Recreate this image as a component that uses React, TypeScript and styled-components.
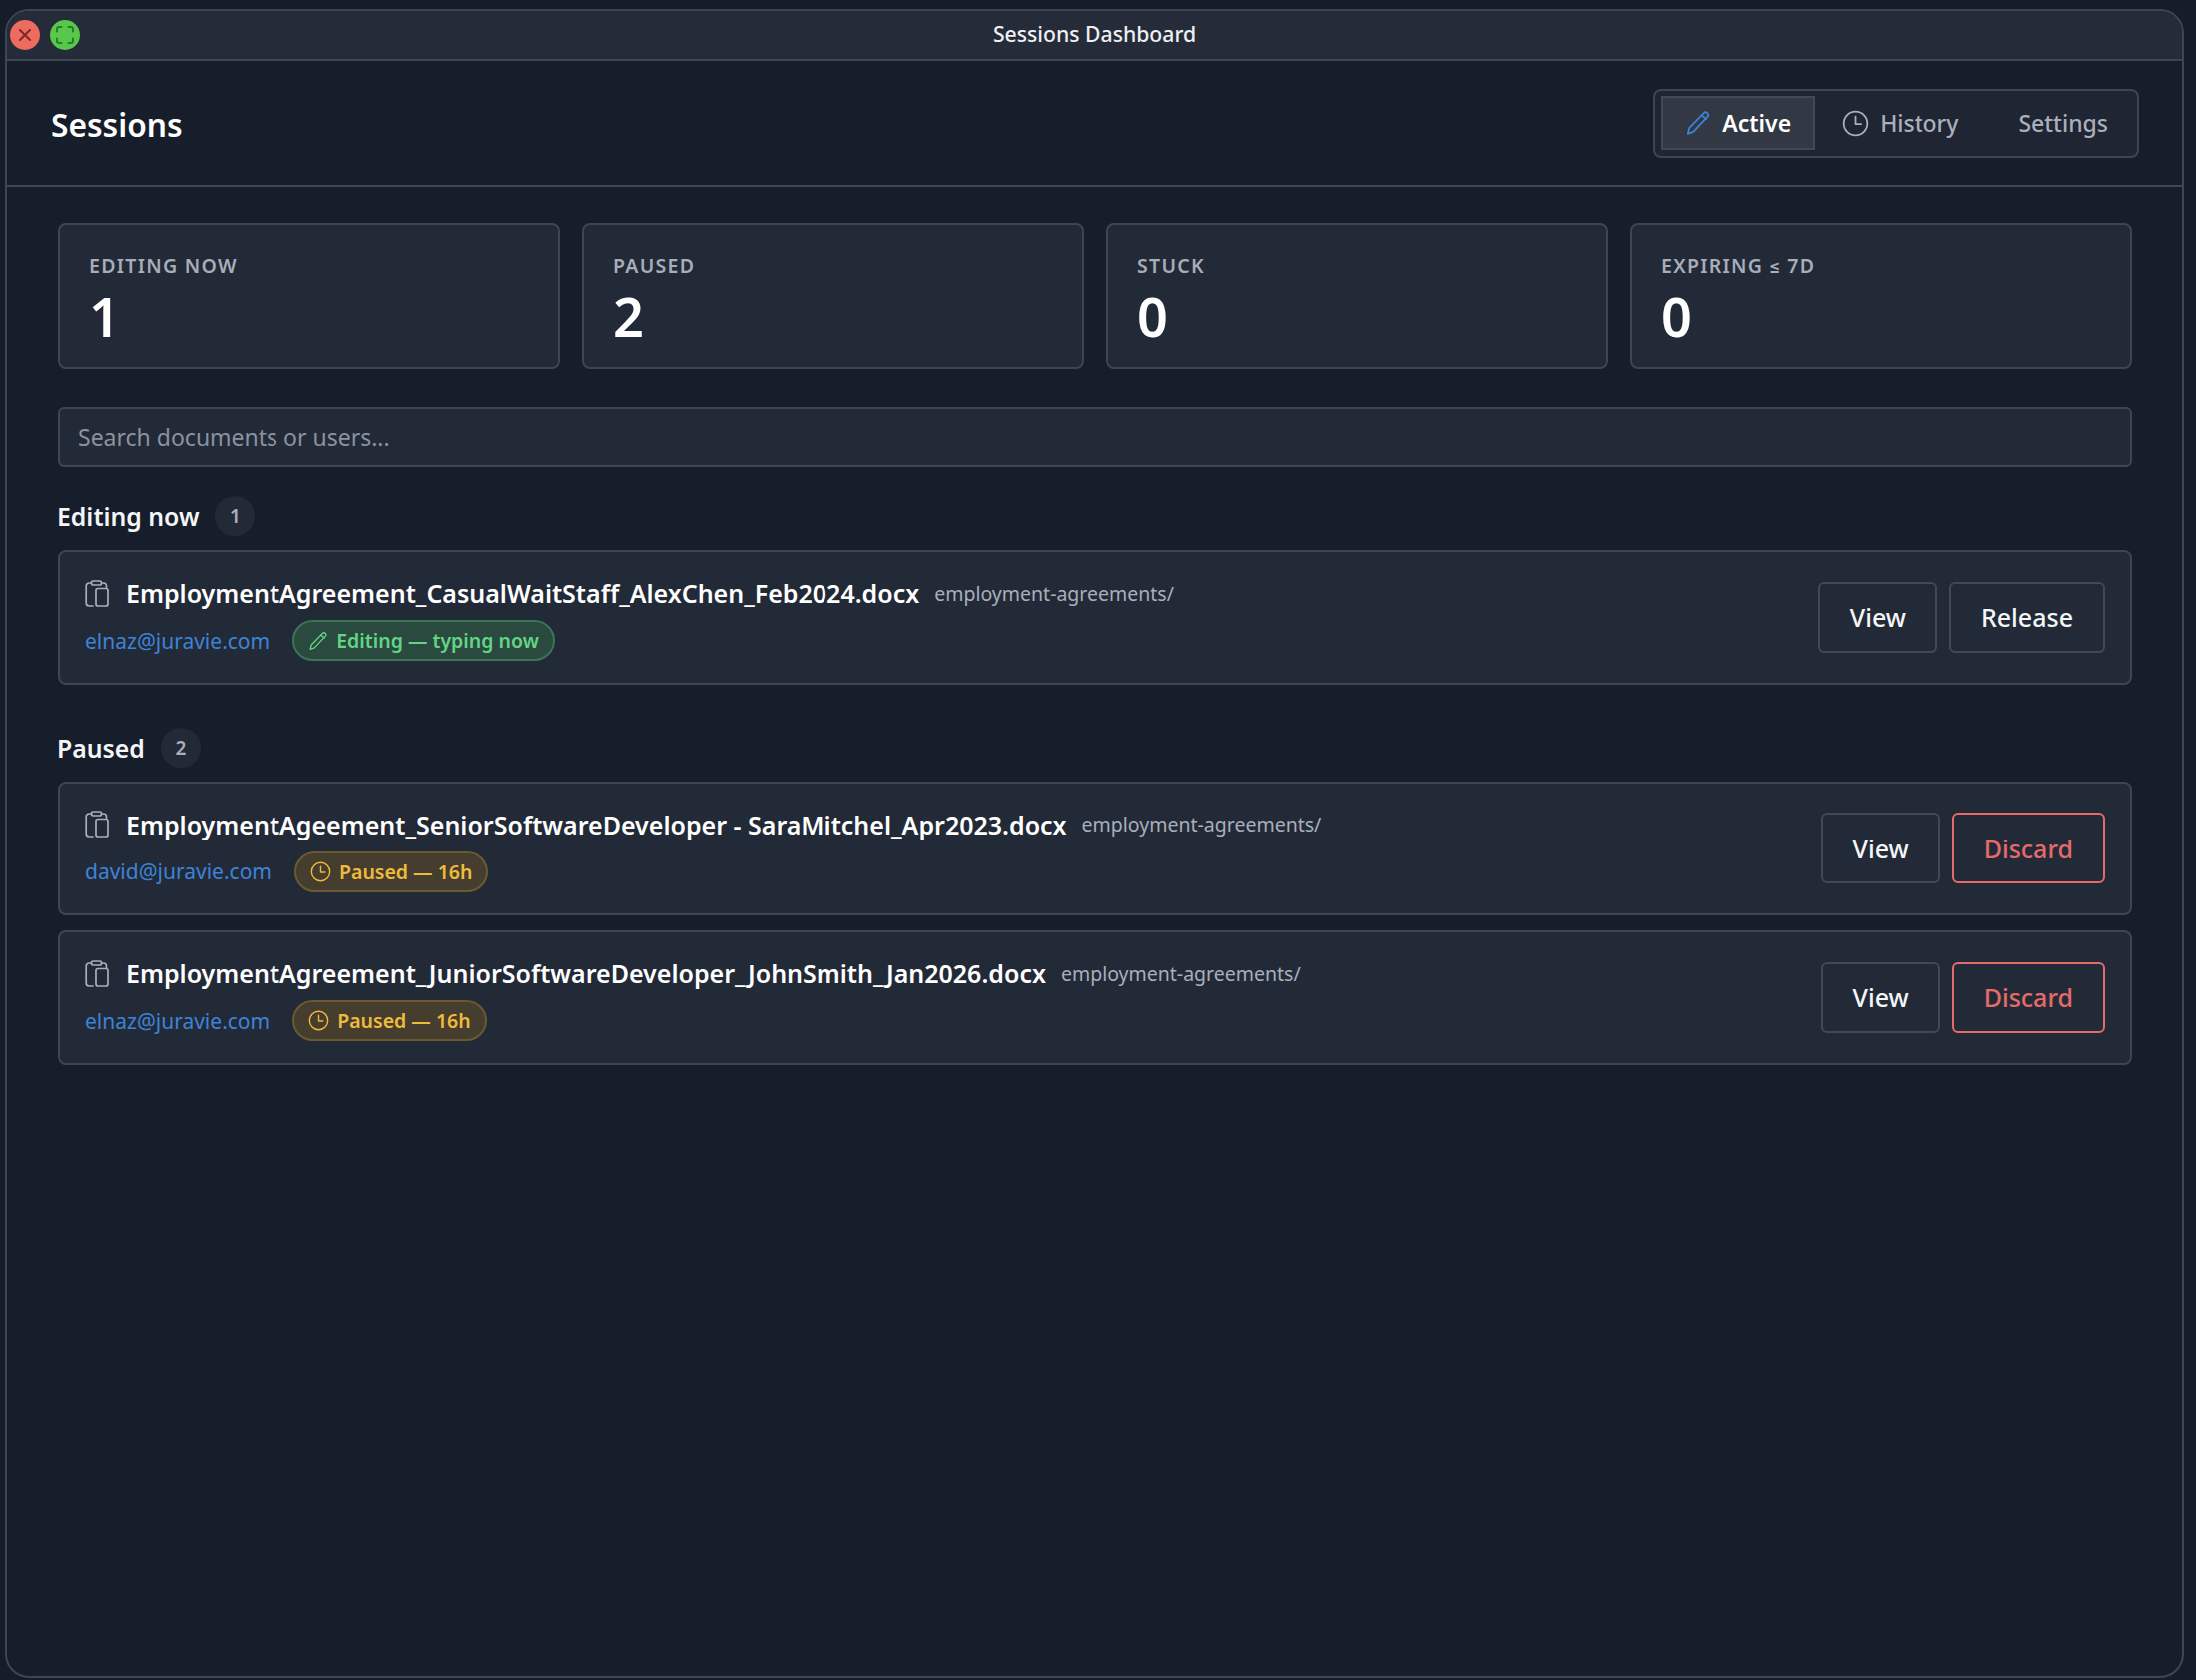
import React from "react";
import styled, { createGlobalStyle } from "styled-components";

const GlobalStyle = createGlobalStyle`
  html, body {
    margin: 0;
    padding: 0;
    background-color: #161d2a;
  }
  * {
    box-sizing: border-box;
  }
`;

const Page = styled.div`
  height: 1683px;
  padding: 9px 12px 2px 5px;
  font-family: "Noto Sans", Roboto, sans-serif;
  color: #f4f6f8;
`;

const AppWindow = styled.div`
  height: 100%;
  display: flex;
  flex-direction: column;
  background-color: #171e2b;
  border: 2px solid #3e4553;
  border-radius: 24px;
  overflow: hidden;
`;

const TitleBar = styled.div`
  flex: none;
  height: 50px;
  display: grid;
  grid-template-columns: 1fr auto 1fr;
  align-items: center;
  padding: 0 3px;
  background-color: #252b38;
  border-bottom: 2px solid #3e4553;
`;

const Lights = styled.div`
  display: flex;
  gap: 10px;
`;

const Light = styled.span<{ $color: string }>`
  width: 30px;
  height: 30px;
  border-radius: 50%;
  display: flex;
  align-items: center;
  justify-content: center;
  background-color: ${(p) => p.$color};
`;

const WindowTitle = styled.div`
  font-size: 21.2px;
  font-weight: 500;
  line-height: 46px;
  padding-bottom: 2px;
  color: #eef0f3;
`;

const Header = styled.header`
  flex: none;
  height: 126px;
  display: flex;
  align-items: center;
  justify-content: space-between;
  padding: 0 43px 0 44px;
  border-bottom: 2px solid #3e4553;
`;

const PageTitle = styled.h1`
  margin: 2px 0 0;
  font-size: 31.7px;
  font-weight: 600;
  color: #ffffff;
`;

const Tabs = styled.nav`
  display: flex;
  align-items: center;
  gap: 3px;
  height: 69px;
  padding: 0 5px 0 6px;
  background-color: #1f2533;
  border: 2px solid #3e4553;
  border-radius: 8px;
`;

const Tab = styled.div<{ $active?: boolean }>`
  height: 54px;
  display: flex;
  align-items: center;
  gap: 11px;
  padding: 0 22px;
  font-size: 23px;
  font-weight: ${(p) => (p.$active ? 600 : 500)};
  color: ${(p) => (p.$active ? "#ffffff" : "#a9afbb")};
  background-color: ${(p) => (p.$active ? "#323945" : "transparent")};
  border: ${(p) => (p.$active ? "2px solid #424956" : "2px solid transparent")};
`;

const SettingsTab = styled(Tab)`
  margin-left: 9px;
`;

const Content = styled.main`
  flex: 1;
  padding: 36px 50px 0 51px;
`;

const Stats = styled.section`
  display: grid;
  grid-template-columns: repeat(4, 1fr);
  gap: 22px;
`;

const StatCard = styled.div`
  height: 147px;
  padding: 28px 29px 0;
  background-color: #232a37;
  border: 2px solid #3e4553;
  border-radius: 8px;
`;

const StatLabel = styled.div`
  font-size: 19.5px;
  line-height: 26px;
  font-weight: 600;
  letter-spacing: 1.3px;
  text-transform: uppercase;
  color: #a7adb9;
`;

const StatValue = styled.div`
  margin-top: 8px;
  font-size: 54px;
  line-height: 60px;
  font-weight: 600;
  color: #ffffff;
`;

const Search = styled.input`
  display: block;
  width: 100%;
  height: 60px;
  margin-top: 38px;
  padding: 0 18px;
  font-family: inherit;
  font-size: 23px;
  color: #f4f6f8;
  background-color: #232a37;
  border: 2px solid #3e4553;
  border-radius: 6px;
  outline: none;

  &::placeholder {
    color: #8b92a0;
    opacity: 1;
  }
`;

const SectionHead = styled.div<{ $top: number }>`
  display: flex;
  align-items: center;
  gap: 16px;
  height: 40px;
  margin-top: ${(p) => p.$top}px;
  margin-bottom: 14px;
`;

const SectionTitle = styled.h2`
  margin: 0 0 0 -1px;
  font-size: 24.8px;
  font-weight: 600;
  color: #f4f6f8;
`;

const CountBadge = styled.span`
  width: 40px;
  height: 40px;
  border-radius: 50%;
  display: flex;
  align-items: center;
  justify-content: center;
  font-size: 19px;
  font-weight: 600;
  color: #a9afbb;
  background-color: #232a37;
`;

const SessionList = styled.div`
  display: flex;
  flex-direction: column;
  gap: 15px;
`;

const SessionCard = styled.article`
  height: 134.5px;
  display: flex;
  align-items: center;
  justify-content: space-between;
  padding: 0 25px 0 25px;
  background-color: #232a37;
  border: 2px solid #3e4553;
  border-radius: 8px;
`;

const SessionInfo = styled.div`
  display: flex;
  flex-direction: column;
  gap: 10px;
  padding-top: 3px;
`;

const NameRow = styled.div`
  display: flex;
  align-items: center;
  height: 34px;
`;

const FileIcon = styled.svg`
  flex: none;
  width: 24px;
  height: 27px;
  margin-right: 17px;
  color: #a9afbb;
`;

const FileName = styled.span`
  font-size: 25px;
  font-weight: 600;
  color: #ffffff;
`;

const FolderPath = styled.span`
  margin-left: 15px;
  font-size: 19.5px;
  color: #a9afbb;
`;

const MetaRow = styled.div`
  display: flex;
  align-items: center;
  gap: 23px;
`;

const Email = styled.span`
  font-size: 21px;
  color: #3d83d8;
`;

const Pill = styled.span<{ $tone: "green" | "amber" }>`
  height: 41px;
  display: inline-flex;
  align-items: center;
  gap: 8px;
  padding: 0 14px;
  border-radius: 21px;
  font-size: 19.5px;
  font-weight: 600;
  color: ${(p) => (p.$tone === "green" ? "#62d585" : "#f0bb3c")};
  background-color: ${(p) => (p.$tone === "green" ? "#2a4a3f" : "#453e2e")};
  border: 2px solid ${(p) => (p.$tone === "green" ? "#3c7554" : "#6b5a2f")};
`;

const Actions = styled.div`
  display: flex;
  gap: 12px;
`;

const Button = styled.button<{ $danger?: boolean }>`
  height: 71px;
  padding: 0 30px;
  font-family: inherit;
  font-size: 25px;
  font-weight: 500;
  color: ${(p) => (p.$danger ? "#e56b6b" : "#f4f6f8")};
  background-color: #232a37;
  border: 2px solid ${(p) => (p.$danger ? "#e56b6b" : "#424956")};
  border-radius: 6px;
`;

const PencilIcon = ({ size, color }: { size: number; color: string }) => (
  <svg width={size} height={size} viewBox="0 0 24 24" fill="none" stroke={color} strokeWidth="1.6" strokeLinejoin="round" strokeLinecap="round">
    <path d="M17.2 3a2.3 2.3 0 0 1 3.6 3.2L7.6 20.2 2.6 22l1.2-5.2Z" />
    <path d="M15.4 5l4 3.4" />
  </svg>
);

const ClockIcon = ({ size, color }: { size: number; color: string }) => (
  <svg width={size} height={size} viewBox="0 0 24 24" fill="none" stroke={color} strokeWidth="1.6" strokeLinecap="round" strokeLinejoin="round">
    <circle cx="12" cy="12" r="10.5" />
    <path d="M12 6v6.5h5" />
  </svg>
);

const ClipboardIcon = () => (
  <FileIcon viewBox="0 0 24 27" fill="none" stroke="currentColor" strokeWidth="1.7" strokeLinecap="round" strokeLinejoin="round">
    <rect x="6.5" y="1" width="10" height="4" rx="1.6" />
    <path d="M6.5 3H4.2A3 3 0 0 0 1.2 6v17a3 3 0 0 0 3 3H8" />
    <path d="M16.5 3h2a3 3 0 0 1 3 3v1.5" />
    <rect x="11" y="8.5" width="12" height="17.5" rx="2" />
  </FileIcon>
);

type Session = {
  file: string;
  email: string;
  status: string;
  tone: "green" | "amber";
  action: string;
};

const SessionRow = ({ session }: { session: Session }) => (
  <SessionCard>
    <SessionInfo>
      <NameRow>
        <ClipboardIcon />
        <FileName>{session.file}</FileName>
        <FolderPath>employment-agreements/</FolderPath>
      </NameRow>
      <MetaRow>
        <Email>{session.email}</Email>
        <Pill $tone={session.tone}>
          {session.tone === "green" ? <PencilIcon size={20} color="#62d585" /> : <ClockIcon size={21} color="#f0bb3c" />}
          {session.status}
        </Pill>
      </MetaRow>
    </SessionInfo>
    <Actions>
      <Button>View</Button>
      <Button $danger={session.action === "Discard"}>{session.action}</Button>
    </Actions>
  </SessionCard>
);

const stats = [
  { label: "Editing now", value: 1 },
  { label: "Paused", value: 2 },
  { label: "Stuck", value: 0 },
  { label: "Expiring ≤ 7d", value: 0 },
];

const editing: Session[] = [
  {
    file: "EmploymentAgreement_CasualWaitStaff_AlexChen_Feb2024.docx",
    email: "elnaz@juravie.com",
    status: "Editing — typing now",
    tone: "green",
    action: "Release",
  },
];

const paused: Session[] = [
  {
    file: "EmploymentAgeement_SeniorSoftwareDeveloper - SaraMitchel_Apr2023.docx",
    email: "david@juravie.com",
    status: "Paused — 16h",
    tone: "amber",
    action: "Discard",
  },
  {
    file: "EmploymentAgreement_JuniorSoftwareDeveloper_JohnSmith_Jan2026.docx",
    email: "elnaz@juravie.com",
    status: "Paused — 16h",
    tone: "amber",
    action: "Discard",
  },
];

const App = () => {
  return (
    <Page>
      <GlobalStyle />
      <AppWindow>
        <TitleBar>
          <Lights>
            <Light $color="#ee6b5f">
              <svg width="16" height="16" viewBox="0 0 16 16" stroke="#7d2a25" strokeWidth="2" strokeLinecap="round">
                <path d="M3 3l10 10M13 3L3 13" />
              </svg>
            </Light>
            <Light $color="#57c84b">
              <svg width="20" height="20" viewBox="0 0 20 20" fill="none" stroke="#2c7a2b" strokeWidth="2" strokeLinecap="round" strokeLinejoin="round">
                <path d="M2 6.5V4a2 2 0 0 1 2-2h2.5M13.5 2H16a2 2 0 0 1 2 2v2.5M18 13.5V16a2 2 0 0 1-2 2h-2.5M6.5 18H4a2 2 0 0 1-2-2v-2.5" />
              </svg>
            </Light>
          </Lights>
          <WindowTitle>Sessions Dashboard</WindowTitle>
        </TitleBar>
        <Header>
          <PageTitle>Sessions</PageTitle>
          <Tabs>
            <Tab $active>
              <PencilIcon size={26} color="#3d83d8" />
              Active
            </Tab>
            <Tab>
              <ClockIcon size={27} color="#a9afbb" />
              History
            </Tab>
            <SettingsTab>Settings</SettingsTab>
          </Tabs>
        </Header>
        <Content>
          <Stats>
            {stats.map((s) => (
              <StatCard key={s.label}>
                <StatLabel>{s.label}</StatLabel>
                <StatValue>{s.value}</StatValue>
              </StatCard>
            ))}
          </Stats>
          <Search placeholder="Search documents or users..." />
          <SectionHead $top={29}>
            <SectionTitle>Editing now</SectionTitle>
            <CountBadge>1</CountBadge>
          </SectionHead>
          <SessionList>
            {editing.map((s) => (
              <SessionRow key={s.file} session={s} />
            ))}
          </SessionList>
          <SectionHead $top={43}>
            <SectionTitle>Paused</SectionTitle>
            <CountBadge>2</CountBadge>
          </SectionHead>
          <SessionList>
            {paused.map((s) => (
              <SessionRow key={s.file} session={s} />
            ))}
          </SessionList>
        </Content>
      </AppWindow>
    </Page>
  );
};

export default App;
